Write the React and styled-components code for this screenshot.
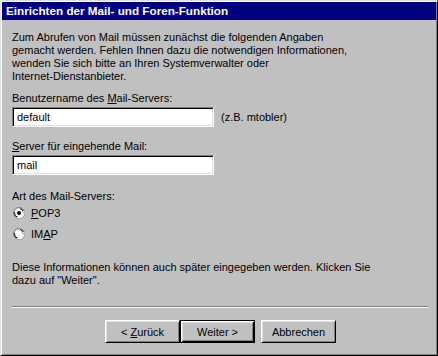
import React from 'react';
import styled, { createGlobalStyle } from 'styled-components';

const GlobalStyle = createGlobalStyle`
  html, body {
    margin: 0;
    padding: 0;
    background: #c0c0c0;
  }
`;

const Window = styled.div`
  width: 438px;
  height: 356px;
  box-sizing: border-box;
  background: #c0c0c0;
  border-top: 1px solid #dfdfdf;
  border-left: 1px solid #dfdfdf;
  border-right: 1px solid #000;
  border-bottom: 1px solid #000;
  box-shadow: inset 1px 1px 0 #fff, inset -1px -1px 0 #808080;
  padding: 1px;
  display: flex;
  flex-direction: column;
  font-family: 'Liberation Sans', Arial, sans-serif;
  font-size: 11px;
  color: #000;
`;

const TitleBar = styled.div`
  height: 18px;
  background: #000080;
  color: #fff;
  font-weight: bold;
  font-size: 11.7px;
  line-height: 18px;
  padding-left: 4px;
`;

const Body = styled.div`
  flex: 1;
  display: flex;
  flex-direction: column;
  padding: 11px 10px 0 10px;
`;

const Para = styled.p`
  margin: 0;
  line-height: 13px;
  margin-top: ${p => p.$mt || 0}px;
  margin-bottom: ${p => p.$mb || 0}px;
`;

const Label = styled.div`
  line-height: 13px;
  margin-bottom: 2px;
`;

const FieldRow = styled.div`
  display: flex;
  align-items: center;
  gap: 7px;
  margin-bottom: ${p => p.$mb || 0}px;
`;

const Input = styled.div`
  width: 202px;
  height: 20px;
  box-sizing: border-box;
  background: #fff;
  border-top: 1px solid #808080;
  border-left: 1px solid #808080;
  border-right: 1px solid #fff;
  border-bottom: 1px solid #fff;
  box-shadow: inset 1px 1px 0 #000, inset -1px -1px 0 #dfdfdf;
  padding: 0 4px;
  line-height: 18px;
`;

const Hint = styled.span`
  line-height: 13px;
`;

const RadioRow = styled.div`
  display: flex;
  align-items: center;
  gap: 6px;
  height: 13px;
  margin-top: ${p => p.$mt || 0}px;
  padding-left: 1px;
`;

const U = styled.span`
  text-decoration: underline;
`;

const Spacer = styled.div`
  flex: 1;
`;

const Separator = styled.div`
  height: 0;
  border-top: 1px solid #808080;
  border-bottom: 1px solid #fff;
  margin: 0 0 12px 0;
  width: 416px;
`;

const ButtonRow = styled.div`
  display: flex;
  padding-left: 93px;
  height: 23px;
  margin-bottom: 11px;
`;

const Button = styled.div`
  width: 75px;
  height: 23px;
  box-sizing: border-box;
  display: flex;
  align-items: center;
  justify-content: center;
  margin-right: ${p => p.$mr || 0}px;
  background: #c0c0c0;
  ${p => p.$default
    ? `border: 1px solid #000;
       box-shadow: inset 1px 1px 0 #fff, inset -1px -1px 0 #000, inset 2px 2px 0 #dfdfdf, inset -2px -2px 0 #808080;`
    : `border-top: 1px solid #fff;
       border-left: 1px solid #fff;
       border-right: 1px solid #000;
       border-bottom: 1px solid #000;
       box-shadow: inset 1px 1px 0 #dfdfdf, inset -1px -1px 0 #808080;`}
`;

const Radio = ({ checked }) => (
  <svg width="12" height="12" viewBox="0 0 12 12">
    <circle cx="6" cy="6" r="5.5" fill="none" stroke="#808080" />
    <circle cx="6" cy="6" r="4.5" fill="#fff" stroke="#000" strokeWidth="1" strokeDasharray="7 7" strokeDashoffset="-8" />
    <path d="M10.5 4 A5 5 0 0 1 4 10.5" fill="none" stroke="#fff" strokeWidth="1.2" />
    {checked && <circle cx="6" cy="6" r="2" fill="#000" />}
  </svg>
);

const App = () => {
  return (
    <>
      <GlobalStyle />
      <Window>
        <TitleBar>Einrichten der Mail- und Foren-Funktion</TitleBar>
        <Body>
          <Para $mb={9}>
            Zum Abrufen von Mail müssen zunächst die folgenden Angaben<br />
            gemacht werden. Fehlen Ihnen dazu die notwendigen Informationen,<br />
            wenden Sie sich bitte an Ihren Systemverwalter oder<br />
            Internet-Dienstanbieter.
          </Para>
          <Label>Benutzername des <U>M</U>ail-Servers:</Label>
          <FieldRow $mb={13}>
            <Input>default</Input>
            <Hint>(z.B. mtobler)</Hint>
          </FieldRow>
          <Label>
            <U>S</U>erver für eingehende Mail:
          </Label>
          <FieldRow $mb={15}>
            <Input>mail</Input>
          </FieldRow>
          <Label>Art des Mail-Servers:</Label>
          <RadioRow $mt={1}>
            <Radio checked />
            <span><U>P</U>OP3</span>
          </RadioRow>
          <RadioRow $mt={8}>
            <Radio />
            <span>IM<U>A</U>P</span>
          </RadioRow>
          <Para $mt={21}>
            Diese Informationen können auch später eingegeben werden. Klicken Sie<br />
            dazu auf "Weiter".
          </Para>
          <Spacer />
          <Separator />
          <ButtonRow>
            <Button><span>&lt; <U>Z</U>urück</span></Button>
            <Button $default $mr={6}><span>Weiter &gt;</span></Button>
            <Button><span>Abbrechen</span></Button>
          </ButtonRow>
        </Body>
      </Window>
    </>
  );
};

export default App;
